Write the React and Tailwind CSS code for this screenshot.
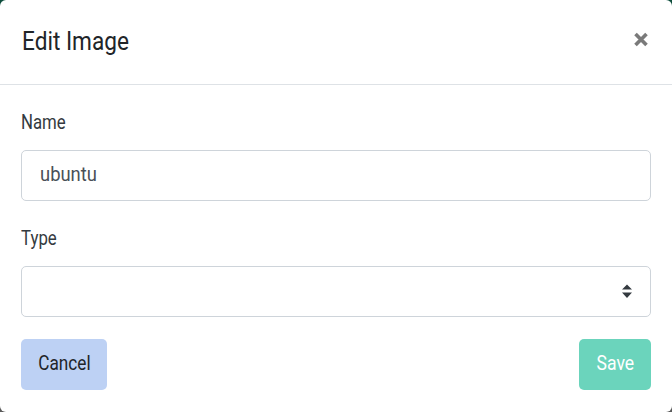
export default function App() {
  const font = { fontFamily: "Roboto, sans-serif" };

  return (
    <div className="w-[672px] h-[412px] bg-gradient-to-b from-[#0d4d3c] to-[#5a5a5a]" style={font}>
      <div className="w-full h-full bg-white rounded-[6px] flex flex-col">
        <div className="h-[85px] flex items-center justify-between px-[22px] border-b border-[#dee2e6]">
          <h2 className="text-[26px] text-[#212529] leading-none mb-[2px]">
            <span className="inline-block origin-left scale-x-[0.87]">Edit Image</span>
          </h2>
          <button className="text-[#7a7a7a] mr-[1px] mb-[6px]">
            <svg width="16" height="15" viewBox="0 0 16 15">
              <path d="M2.5 2 L13.5 13 M13.5 2 L2.5 13" stroke="currentColor" strokeWidth="3.6" />
            </svg>
          </button>
        </div>

        <div className="flex flex-col px-[21px] pt-[24px]">
          <label className="text-[20px] text-[#343a40] leading-[26px]">
            <span className="inline-block origin-left scale-x-[0.84]">Name</span>
          </label>
          <div className="mt-[15px] h-[51px] border border-[#ced4da] rounded-[5px] flex items-center px-[18px] pb-[3px] text-[20px] text-[#495057]">
            <span className="inline-block origin-left scale-x-[0.92]">ubuntu</span>
          </div>

          <label className="mt-[24px] text-[20px] text-[#343a40] leading-[26px]">
            <span className="inline-block origin-left scale-x-[0.84]">Type</span>
          </label>
          <div className="mt-[15px] h-[51px] border border-[#ced4da] rounded-[5px] flex items-center justify-end pr-[18px]">
            <svg width="10" height="15" viewBox="0 0 10 15" className="text-[#343a40]">
              <path d="M5 0.5 L10 5.5 H0 Z M0 8.5 H10 L5 14 Z" fill="currentColor" />
            </svg>
          </div>

          <div className="mt-[22px] flex justify-between">
            <button className="h-[51px] w-[86px] pb-[4px] rounded-[5px] bg-[#bdd1f4] text-[#212529] text-[20px]">
              <span className="inline-block scale-x-[0.86]">Cancel</span>
            </button>
            <button className="h-[51px] w-[72px] pb-[4px] rounded-[5px] bg-[#6bd4bc] text-white text-[20px]">
              <span className="inline-block scale-x-[0.88]">Save</span>
            </button>
          </div>
        </div>
      </div>
    </div>
  );
}
